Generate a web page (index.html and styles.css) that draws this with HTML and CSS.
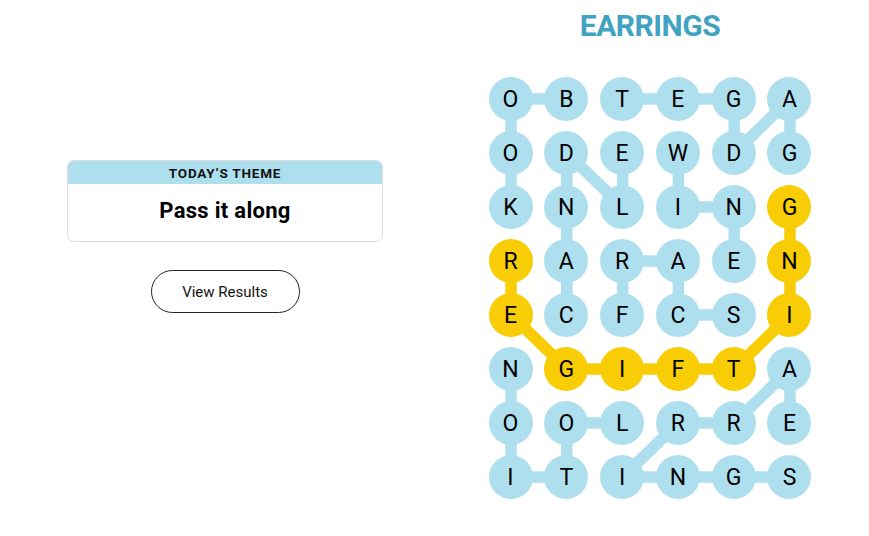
FILE: index.html
```html
<!DOCTYPE html>
<html lang="en">
<head>
<meta charset="utf-8">
<title>Strands</title>
<link rel="stylesheet" href="styles.css">
</head>
<body>
<div class="page">
  <section class="side">
    <div class="theme-card">
      <div class="theme-head">TODAY’S THEME</div>
      <div class="theme-body">Pass it along</div>
    </div>
    <button class="results-btn">View Results</button>
  </section>
  <section class="board-area">
    <h1 class="found-word">EARRINGS</h1>
    <div class="board">
      <svg class="links" viewBox="0 0 323 422" width="323" height="422">
        <g class="blue">
          <!-- BOOK -->
          <line x1="77.8" y1="22" x2="22" y2="22"/>
          <line x1="22" y1="22" x2="22" y2="76"/>
          <line x1="22" y1="76" x2="22" y2="130"/>
          <!-- GADGET -->
          <line x1="301" y1="76" x2="301" y2="22"/>
          <line x1="301" y1="22" x2="245.2" y2="76"/>
          <line x1="245.2" y1="76" x2="245.2" y2="22"/>
          <line x1="245.2" y1="22" x2="189.4" y2="22"/>
          <line x1="189.4" y1="22" x2="133.6" y2="22"/>
          <!-- CANDLE -->
          <line x1="77.8" y1="238" x2="77.8" y2="184"/>
          <line x1="77.8" y1="184" x2="77.8" y2="130"/>
          <line x1="77.8" y1="130" x2="77.8" y2="76"/>
          <line x1="77.8" y1="76" x2="133.6" y2="130"/>
          <line x1="133.6" y1="130" x2="133.6" y2="76"/>
          <!-- WINE -->
          <line x1="189.4" y1="76" x2="189.4" y2="130"/>
          <line x1="189.4" y1="130" x2="245.2" y2="130"/>
          <line x1="245.2" y1="130" x2="245.2" y2="184"/>
          <!-- SCARF -->
          <line x1="245.2" y1="238" x2="189.4" y2="238"/>
          <line x1="189.4" y1="238" x2="189.4" y2="184"/>
          <line x1="189.4" y1="184" x2="133.6" y2="184"/>
          <line x1="133.6" y1="184" x2="133.6" y2="238"/>
          <!-- LOTION -->
          <line x1="133.6" y1="346" x2="77.8" y2="346"/>
          <line x1="77.8" y1="346" x2="77.8" y2="400"/>
          <line x1="77.8" y1="400" x2="22" y2="400"/>
          <line x1="22" y1="400" x2="22" y2="346"/>
          <line x1="22" y1="346" x2="22" y2="292"/>
          <!-- EARRINGS -->
          <line x1="301" y1="346" x2="301" y2="292"/>
          <line x1="301" y1="292" x2="245.2" y2="346"/>
          <line x1="245.2" y1="346" x2="189.4" y2="346"/>
          <line x1="189.4" y1="346" x2="133.6" y2="400"/>
          <line x1="133.6" y1="400" x2="189.4" y2="400"/>
          <line x1="189.4" y1="400" x2="245.2" y2="400"/>
          <line x1="245.2" y1="400" x2="301" y2="400"/>
        </g>
        <g class="gold">
          <!-- REGIFTING -->
          <line x1="22" y1="184" x2="22" y2="238"/>
          <line x1="22" y1="238" x2="77.8" y2="292"/>
          <line x1="77.8" y1="292" x2="133.6" y2="292"/>
          <line x1="133.6" y1="292" x2="189.4" y2="292"/>
          <line x1="189.4" y1="292" x2="245.2" y2="292"/>
          <line x1="245.2" y1="292" x2="301" y2="238"/>
          <line x1="301" y1="238" x2="301" y2="184"/>
          <line x1="301" y1="184" x2="301" y2="130"/>
        </g>
      </svg>
      <span class="cell">O</span><span class="cell">B</span><span class="cell">T</span><span class="cell">E</span><span class="cell">G</span><span class="cell">A</span>
      <span class="cell">O</span><span class="cell">D</span><span class="cell">E</span><span class="cell">W</span><span class="cell">D</span><span class="cell">G</span>
      <span class="cell">K</span><span class="cell">N</span><span class="cell">L</span><span class="cell">I</span><span class="cell">N</span><span class="cell spangram">G</span>
      <span class="cell spangram">R</span><span class="cell">A</span><span class="cell">R</span><span class="cell">A</span><span class="cell">E</span><span class="cell spangram">N</span>
      <span class="cell spangram">E</span><span class="cell">C</span><span class="cell">F</span><span class="cell">C</span><span class="cell">S</span><span class="cell spangram">I</span>
      <span class="cell">N</span><span class="cell spangram">G</span><span class="cell spangram">I</span><span class="cell spangram">F</span><span class="cell spangram">T</span><span class="cell">A</span>
      <span class="cell">O</span><span class="cell">O</span><span class="cell">L</span><span class="cell">R</span><span class="cell">R</span><span class="cell">E</span>
      <span class="cell">I</span><span class="cell">T</span><span class="cell">I</span><span class="cell">N</span><span class="cell">G</span><span class="cell">S</span>
    </div>
  </section>
</div>
</body>
</html>
```

FILE: styles.css
```css
* { box-sizing: border-box; }

html, body {
  margin: 0;
  padding: 0;
  background: #ffffff;
}

body {
  font-family: Roboto, "Liberation Sans", Arial, sans-serif;
  color: #121212;
}

.page {
  display: flex;
  width: 869px;
  height: 536px;
}

.side {
  width: 450px;
  display: flex;
  flex-direction: column;
  align-items: center;
  padding-top: 160px;
}

.theme-card {
  width: 316px;
  border: 1px solid #dcdcdc;
  border-radius: 7px;
  overflow: hidden;
}

.theme-head {
  background: #aedfee;
  height: 23px;
  line-height: 24px;
  text-align: center;
  font-size: 13.5px;
  font-weight: 700;
  letter-spacing: 0.8px;
  color: #121212;
}

.theme-body {
  height: 57px;
  line-height: 54px;
  text-align: center;
  font-size: 22px;
  font-weight: 700;
  letter-spacing: 0.3px;
  color: #000;
}

.results-btn {
  margin-top: 28px;
  width: 149px;
  height: 43px;
  border: 1px solid #222;
  border-radius: 22px;
  background: #fff;
  font-family: Roboto, "Liberation Sans", Arial, sans-serif;
  font-size: 15px;
  color: #121212;
  padding: 0;
}

.board-area {
  width: 400px;
  display: flex;
  flex-direction: column;
  align-items: center;
  padding-top: 8px;
}

.found-word {
  margin: 0;
  height: 36px;
  line-height: 36px;
  font-size: 30px;
  font-weight: 700;
  color: #41a3c2;
  letter-spacing: -0.5px;
}

.board {
  position: relative;
  margin-top: 33px;
  display: grid;
  grid-template-columns: repeat(6, 44px);
  grid-auto-rows: 44px;
  column-gap: 11.8px;
  row-gap: 10px;
}

.links {
  position: absolute;
  left: 0;
  top: 0;
  z-index: 0;
}

.links line {
  stroke-width: 11.5;
  stroke-linecap: butt;
}

.links .blue line { stroke: #aedfee; }
.links .gold line { stroke: #f8cd05; }

.cell {
  position: relative;
  z-index: 1;
  width: 44px;
  height: 44px;
  border-radius: 50%;
  background: #aedfee;
  display: flex;
  align-items: center;
  justify-content: center;
  font-size: 23px;
  font-weight: 400;
  line-height: 1;
  color: #000;
}

.cell.spangram { background: #f8cd05; }
```
